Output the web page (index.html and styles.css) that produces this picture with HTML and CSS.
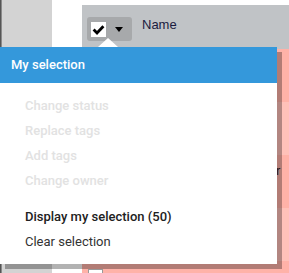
FILE: index.html
```html
<!DOCTYPE html>
<html lang="en">
<head>
    <meta charset="UTF-8" />
    <title>Selection menu</title>
    <link rel="stylesheet" href="styles.css">
</head>
<body>
    <div class="page">
        <aside class="sidebar"></aside>
        <div class="spacer"></div>
        <main class="list">
            <div class="list-head">
                <div class="select-btn">
                    <span class="check">
                        <svg width="15" height="15" viewBox="0 0 15 15">
                            <path d="M2.6 7.6 L6 11 L12.4 4.2" fill="none" stroke="#000" stroke-width="2.8" />
                        </svg>
                    </span>
                    <span class="caret-down"></span>
                </div>
                <span class="col-name">Name</span>
            </div>
            <div class="row"><span class="box"></span><span class="cell">Project dossier r</span></div>
            <div class="row alt"><span class="box"></span><span class="cell">Annual report</span></div>
            <div class="row"><span class="box"></span><span class="cell">Quarterly review for</span></div>
            <div class="row alt"><span class="box"></span><span class="cell">Budget planning</span></div>
            <div class="row"><span class="box"></span></div>
        </main>
    </div>

    <div class="menu">
        <div class="menu-title">My selection</div>
        <ul class="menu-group">
            <li class="disabled">Change status</li>
            <li class="disabled">Replace tags</li>
            <li class="disabled">Add tags</li>
            <li class="disabled">Change owner</li>
        </ul>
        <ul class="menu-group last">
            <li class="strong">Display my selection (50)</li>
            <li>Clear selection</li>
        </ul>
    </div>
</body>
</html>
```

FILE: styles.css
```css
* {
    margin: 0;
    padding: 0;
    box-sizing: border-box;
}

body {
    width: 289px;
    height: 273px;
    overflow: hidden;
    background: #fff;
    font-family: Roboto, "Liberation Sans", sans-serif;
    position: relative;
}

.page {
    display: flex;
    height: 273px;
    overflow: hidden;
}

.sidebar {
    width: 52px;
    background: #d3d3d3;
    border-left: 1px solid #555;
    box-shadow: inset 1px 0 0 #8a8a8a;
}

.spacer {
    width: 30px;
    background: #fff;
}

.list {
    flex: 1;
    padding-top: 5px;
    background: #fff;
    overflow: hidden;
}

.list-head {
    height: 44px;
    background: #c0c3c6;
    display: flex;
    align-items: flex-start;
    padding: 12px 0 0 5px;
}

.select-btn {
    width: 45px;
    height: 24px;
    background: #a7a9ab;
    border-radius: 3px;
    display: flex;
    align-items: center;
    padding-left: 4px;
}

.check {
    width: 15px;
    height: 15px;
    background: #fff;
    display: flex;
}

.caret-down {
    margin-left: 9px;
    border-left: 4.5px solid transparent;
    border-right: 4.5px solid transparent;
    border-top: 5px solid #000;
}

.col-name {
    margin-left: 10px;
    font-family: "Liberation Sans", Arial, sans-serif;
    font-size: 13px;
    line-height: 15px;
    color: #1b1b40;
}

.row {
    height: 53px;
    background: #ffb2a8;
    display: flex;
    align-items: flex-start;
    padding: 8px 0 0 6px;
    font-family: "Liberation Sans", Arial, sans-serif;
    font-size: 13px;
    color: #2a1a1a;
    white-space: nowrap;
}

.row.alt {
    background: #ffc1b9;
}

.box {
    width: 15px;
    height: 15px;
    background: #fff;
    border: 1px solid #999;
    flex: none;
}

.cell {
    margin-left: 64px;
}

/* menu ouvert par dessus la liste */
.menu {
    position: absolute;
    left: 0;
    top: 47px;
    width: 277px;
    background: #fff;
    box-shadow: 5px 5px 0 rgba(0, 0, 0, 0.3);
}

.menu::before {
    content: "";
    position: absolute;
    top: -9px;
    left: 98px;
    border-left: 10px solid transparent;
    border-right: 10px solid transparent;
    border-bottom: 9px solid #fff;
}

.menu-title {
    height: 36px;
    line-height: 36px;
    background: #3498db;
    color: #fff;
    font-size: 13px;
    font-weight: 500;
    padding-left: 11px;
}

.menu-group {
    list-style: none;
    padding-top: 10px;
}

.menu-group.last {
    padding-top: 11px;
    padding-bottom: 10px;
}

.menu-group li {
    padding-left: 25px;
    line-height: 25px;
    font-size: 13px;
    color: #333;
}

.menu-group li.disabled {
    color: #e2e2e2;
    font-weight: 500;
}

.menu-group li.strong {
    color: #212121;
    font-weight: 500;
}
```
